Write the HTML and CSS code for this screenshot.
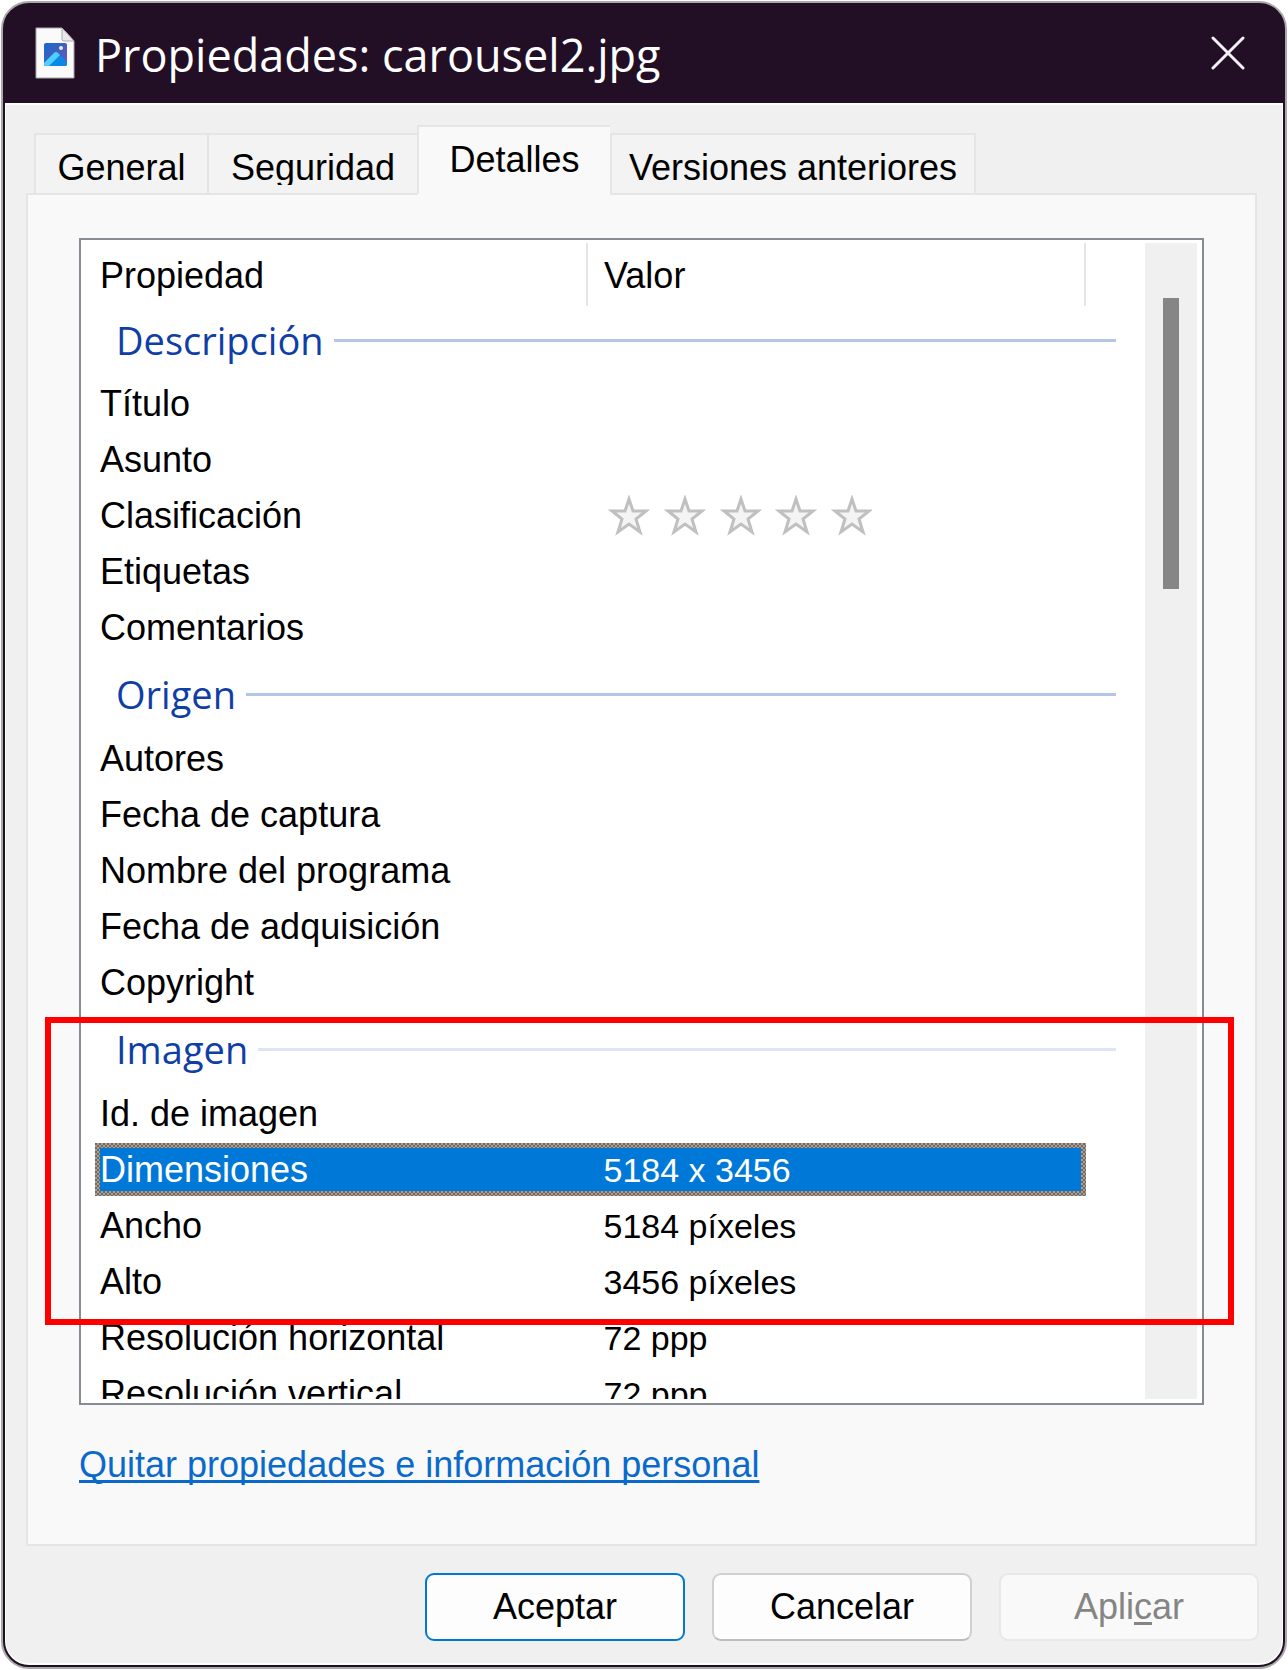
FILE: index.html
```html
<!DOCTYPE html>
<html lang="es">
<head>
<meta charset="utf-8">
<title>Propiedades: carousel2.jpg</title>
<link rel="stylesheet" href="styles.css">
</head>
<body>
<main class="window">
  <header class="titlebar">
    <svg class="file-icon" viewBox="0 0 40 52" aria-hidden="true">
      <defs>
        <linearGradient id="sky" x1="0" y1="0" x2="1" y2="1"><stop offset="0" stop-color="#1769c9"/><stop offset="1" stop-color="#6f55b5"/></linearGradient>
        <clipPath id="photo"><rect x="9" y="16" width="23" height="23" rx="2"/></clipPath>
      </defs>
      <path d="M1 1H27L39 14V51H1Z" fill="#fafafa" stroke="#a9a5aa"/>
      <path d="M27 1V12Q27 14 29 14H39Z" fill="#e9e9e9" stroke="#aaa"/>
      <g clip-path="url(#photo)">
        <rect x="9" y="16" width="23" height="23" fill="url(#sky)"/>
        <path d="M7 38L19 26Q21 24 23 26L36 39V41H7Z" fill="#0a8ae6"/>
        <path d="M7 38L19 26Q21 24 23 26L25 28L13 40H7Z" fill="#4fd0fc"/>
        <circle cx="26" cy="21" r="2" fill="#e8f0ff"/>
      </g>
    </svg>
    <h1 class="title">Propiedades: carousel2.jpg</h1>
    <button class="close" type="button" aria-label="Cerrar">
      <svg viewBox="0 0 34 34" aria-hidden="true"><path d="M2 2L32 32M32 2L2 32" stroke="#f3eff4" stroke-width="3" stroke-linecap="round"/></svg>
    </button>
  </header>

  <div class="body">
    <div class="tabs" role="tablist">
      <button class="tab tab-general" role="tab" type="button"><span class="tab-label">General</span></button>
      <button class="tab tab-security" role="tab" type="button"><span class="tab-label">Seguridad</span></button>
      <button class="tab tab-details active" role="tab" type="button" aria-selected="true"><span class="tab-label">Detalles</span></button>
      <button class="tab tab-versions" role="tab" type="button"><span class="tab-label">Versiones anteriores</span></button>
    </div>

    <section class="panel" role="tabpanel">
      <div class="list-wrap">
        <div class="list">
          <table class="props">
            <thead><tr><th scope="col">Propiedad</th><th scope="col">Valor</th></tr></thead>
            <tbody>
              <tr class="group"><th colspan="2">Descripción</th></tr>
              <tr><td>Título</td><td></td></tr>
              <tr><td>Asunto</td><td></td></tr>
              <tr><td>Clasificación</td><td>
                <svg class="stars" viewBox="0 0 268 42" role="img" aria-label="Sin clasificar">
                  <defs><path id="star" d="M25 4L29 16H42L32 24L36 37L25 29L14 37L18 24L8 16H21Z" fill="#f4f4f4" stroke="#c0c0c0" stroke-width="3"/></defs>
                  <use href="#star"/><use href="#star" x="56"/><use href="#star" x="112"/><use href="#star" x="167"/><use href="#star" x="223"/>
                </svg></td></tr>
              <tr><td>Etiquetas</td><td></td></tr>
              <tr><td>Comentarios</td><td></td></tr>
            </tbody>
            <tbody>
              <tr class="group"><th colspan="2">Origen</th></tr>
              <tr><td>Autores</td><td></td></tr>
              <tr><td>Fecha de captura</td><td></td></tr>
              <tr><td>Nombre del programa</td><td></td></tr>
              <tr><td>Fecha de adquisición</td><td></td></tr>
              <tr><td>Copyright</td><td></td></tr>
            </tbody>
            <tbody>
              <tr class="group pale"><th colspan="2">Imagen</th></tr>
              <tr><td>Id. de imagen</td><td></td></tr>
              <tr class="selected"><td>Dimensiones</td><td>5184 x 3456</td></tr>
              <tr><td>Ancho</td><td>5184 píxeles</td></tr>
              <tr><td>Alto</td><td>3456 píxeles</td></tr>
              <tr><td>Resolución horizontal</td><td>72 ppp</td></tr>
              <tr><td>Resolución vertical</td><td>72 ppp</td></tr>
            </tbody>
          </table>
          <div class="scrollbar"><div class="thumb"></div></div>
        </div>
        <div class="highlight"></div>
      </div>
      <a class="remove-link" href="#">Quitar propiedades e información personal</a>
    </section>

    <footer class="actions">
      <button class="btn primary" type="button">Aceptar</button>
      <button class="btn" type="button">Cancelar</button>
      <button class="btn" type="button" disabled>Apli<u>c</u>ar</button>
    </footer>
  </div>
</main>
</body>
</html>
```
FILE: styles.css
```css
* { box-sizing: border-box; }

body {
  margin: 0;
  padding: 1px;
  background: #fff;
  color: #000;
  font: 36px/40px "Liberation Sans", Arial, sans-serif;
}

button { font: inherit; color: inherit; margin: 0; padding: 0; }

.window {
  border: 2px solid #a9a9a9;
  border-radius: 28px;
  background: #220f26;
  overflow: hidden;
}

.titlebar {
  display: flex;
  align-items: center;
  height: 100px;
  padding: 0 40px 0 32px;
}

.file-icon { width: 40px; height: 52px; }

.title {
  flex: 1;
  margin: 0 0 0 20px;
  padding-top: 4px;
  color: #fff;
  font: 400 45px/60px "Open Sans", "Noto Sans", sans-serif;
}

.close {
  display: flex;
  border: 0;
  background: none;
}

.close svg { width: 34px; height: 34px; }

.body {
  margin: 0 2px 2px;
  padding: 20px 25px 22px 20px;
  border: 1px solid #fff;
  border-width: 2px 1px;
  border-radius: 0 0 24px 24px;
  background: #f0f0f0;
}

.tabs {
  display: flex;
  align-items: flex-end;
  padding-left: 8px;
}

.tab {
  height: 62px;
  border: 2px solid #e5e5e5;
  border-right-width: 0;
  background: #f3f3f3;
}

.tab:last-child { border-right-width: 2px; }

.tab-label {
  display: block;
  padding-top: 8px;
  line-height: 34px;
}

.tab-general { width: 173px; }
.tab-security { width: 210px; }
.tab-security .tab-label { overflow: hidden; }
.tab-details { width: 193px; }
.tab-versions { width: 366px; }

.tab.active {
  height: 70px;
  border-bottom-color: #f9f9f9;
  background: #f9f9f9;
}

.tab.active .tab-label { padding: 0; }

.panel {
  margin-top: -2px;
  padding: 43px 51px 59px;
  border: 2px solid #e5e5e5;
  background: #f9f9f9;
}

.list-wrap { position: relative; }

.list {
  display: flex;
  height: 1167px;
  padding: 3px 5px 4px 14px;
  border: 2px solid #868b94;
  background: #fff;
  overflow: hidden;
}

.props {
  display: block;
  flex: 1;
  padding-right: 59px;
  overflow: hidden;
}

.props thead, .props tbody { display: block; }

.props tr {
  display: grid;
  grid-template-columns: 488fr 494fr;
  align-items: center;
  height: 53px;
  margin-bottom: 3px;
  border: 5px solid transparent;
}

.props th, .props td {
  padding: 0;
  font-weight: 400;
  text-align: left;
  white-space: nowrap;
}

.props td + td { padding-left: 16px; font-size: 34px; }

.props thead tr {
  grid-template-columns: 489fr 499fr;
  height: 63px;
  margin: 0;
  border-width: 0 0 0 5px;
}

.props thead th {
  padding-top: 3px;
  border-right: 2px solid #e5e5e5;
  line-height: 60px;
}

.props thead th + th { padding-left: 16px; }

.props .group {
  display: block;
  height: 71px;
  margin: 0 -30px 0 0;
  border: 0;
}

.props tbody + tbody .group { height: 72px; margin-top: 6px; }

.props .group th {
  display: flex;
  align-items: center;
  gap: 10px;
  padding-left: 21px;
  color: #0f3fa6;
  font: 400 38px/68px "Open Sans", "Noto Sans", sans-serif;
}

.group th::after {
  content: "";
  flex: 1;
  height: 3px;
  background: #b5c5e7;
}

.group.pale th::after { background: #dde4f4; }

/* dithered focus frame round the selected row */
.props .selected {
  color: #fff;
  background:
    linear-gradient(#0078d7, #0078d7) padding-box,
    repeating-conic-gradient(#f28c32 0 25%, #2a7cc4 0 50%) 0 0 / 4px 4px border-box;
}

.stars { display: block; width: 268px; height: 42px; }

.scrollbar {
  width: 52px;
  padding: 55px 18px 0;
  background: #f0f0f0;
}

.thumb { height: 291px; background: #868686; }

.highlight {
  position: absolute;
  top: 779px;
  left: -34px;
  right: -30px;
  height: 308px;
  border: 6px solid #f00;
  pointer-events: none;
}

.remove-link {
  display: inline-block;
  margin-top: 40px;
  color: #0a6acb;
  text-decoration-thickness: 3px;
  text-underline-offset: 3px;
  text-decoration-skip-ink: none;
}

.actions {
  display: flex;
  justify-content: flex-end;
  gap: 27px;
  margin-right: -2px;
  padding-top: 27px;
}

.btn {
  width: 260px;
  height: 68px;
  border: 2px solid #d0d0d0;
  border-bottom-color: #bcbcbc;
  border-radius: 9px;
  background: #fdfdfd;
}

.btn.primary { border-color: #0078d4; }

.btn:disabled {
  border-color: #e8e8e8;
  background: #f9f9f9;
  color: #858585;
}

.btn u { text-decoration-thickness: 3px; text-underline-offset: 3px; }
```
